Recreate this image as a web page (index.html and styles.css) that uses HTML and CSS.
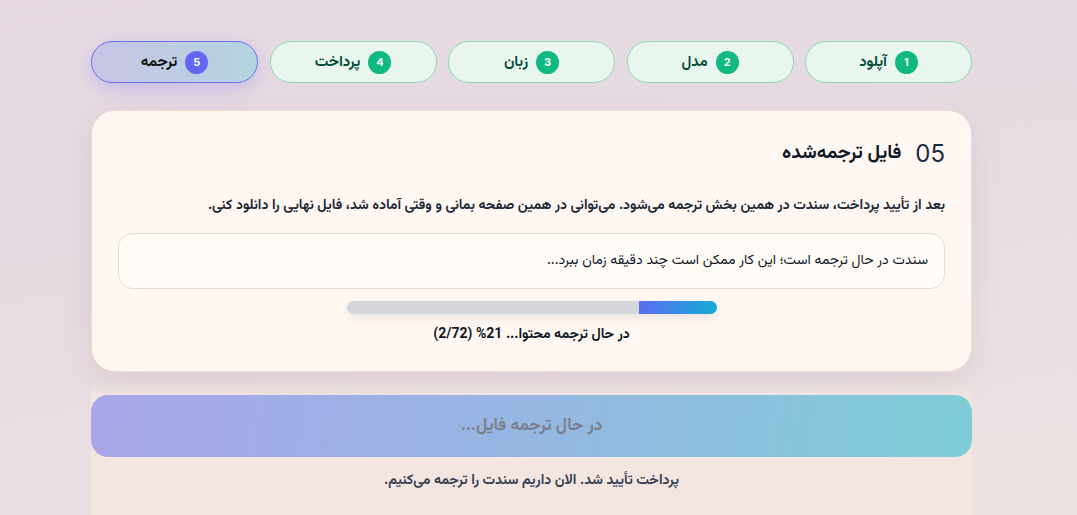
FILE: index.html
```html
<!DOCTYPE html>
<html lang="fa" dir="rtl">
<head>
<meta charset="utf-8">
<title>ترجمه</title>
<link rel="stylesheet" href="styles.css">
</head>
<body>
<div class="page">
  <ol class="steps">
    <li class="step"><span class="num">1</span><span class="label">آپلود</span></li>
    <li class="step"><span class="num">2</span><span class="label">مدل</span></li>
    <li class="step"><span class="num">3</span><span class="label">زبان</span></li>
    <li class="step"><span class="num">4</span><span class="label">پرداخت</span></li>
    <li class="step active"><span class="num">5</span><span class="label">ترجمه</span></li>
  </ol>

  <section class="card">
    <h2 class="card-title"><span class="idx">05</span><span>فایل ترجمه‌شده</span></h2>
    <p class="desc">بعد از تأیید پرداخت، سندت در همین بخش ترجمه می‌شود. می‌توانی در همین صفحه بمانی و وقتی آماده شد، فایل نهایی را دانلود کنی.</p>
    <div class="status">سندت در حال ترجمه است؛ این کار ممکن است چند دقیقه زمان ببرد...</div>
    <div class="progress-wrap">
      <div class="progress"><div class="fill" style="width:21%"></div></div>
      <div class="progress-text">در حال ترجمه محتوا... 21% (2/72)</div>
    </div>
  </section>

  <div class="footer">
    <button class="cta" disabled>در حال ترجمه فایل...</button>
    <p class="note">پرداخت تأیید شد. الان داریم سندت را ترجمه می‌کنیم.</p>
  </div>
</div>
</body>
</html>
```
FILE: styles.css
```css
* { box-sizing: border-box; }
html, body { margin: 0; height: 100%; }
body {
  font-family: "Vazirmatn", "Noto Sans Arabic", "DejaVu Sans", sans-serif;
  background: linear-gradient(170deg, #e6d9e3 0%, #e7dbe2 40%, #ede3e2 100%);
  color: #111827;
  overflow: hidden;
  padding-right: 14px;
}
.page {
  width: 881px;
  margin: 0 auto;
  padding-top: 41px;
}
.steps {
  list-style: none;
  margin: 0;
  padding: 0;
  display: grid;
  grid-template-columns: repeat(5, 1fr);
  gap: 11.5px;
}
.step {
  height: 42px;
  border: 1px solid #8ed9b7;
  background: #e9f6ee;
  border-radius: 999px;
  display: flex;
  align-items: center;
  justify-content: center;
  gap: 8px;
}
.num {
  width: 23px;
  height: 23px;
  border-radius: 50%;
  background: #10b981;
  color: #fff;
  font-family: "Inter", "Roboto", sans-serif;
  font-weight: 700;
  font-size: 11px;
  display: flex;
  align-items: center;
  justify-content: center;
}
.label {
  font-weight: 700;
  font-size: 15px;
  color: #064e3b;
}
.step.active {
  border-color: #6b70f2;
  background: linear-gradient(90deg, #c8c4e5 0%, #b4d4df 100%);
  box-shadow: 0 6px 18px rgba(99, 102, 241, 0.25);
}
.step.active .num { background: #6366f1; }
.step.active .label { color: #111; }

.card {
  margin-top: 27px;
  background: #fff8f2;
  border: 1px solid #efdccd;
  border-radius: 24px;
  padding: 29px 26px 25px;
  box-shadow: 0 10px 30px rgba(120, 90, 90, 0.12);
}
.card-title {
  margin: 0;
  display: flex;
  align-items: center;
  gap: 14px;
  font-size: 19px;
  font-weight: 700;
  line-height: 28px;
}
.idx {
  font-family: "Inter", "Roboto", sans-serif;
  font-weight: 400;
  font-size: 24px;
  color: #1f2a44;
}
.desc {
  margin: 27px 0 16px;
  font-size: 14px;
  font-weight: 700;
  color: #1f2937;
}
.status {
  background: #fffcf8;
  border: 1px solid #eadcd2;
  border-radius: 14px;
  padding: 0 16px;
  height: 56px;
  display: flex;
  align-items: center;
  font-size: 14px;
  color: #111827;
}
.progress-wrap {
  display: flex;
  flex-direction: column;
  align-items: center;
  margin-top: 12px;
}
.progress {
  width: 370px;
  height: 13px;
  border-radius: 999px;
  background: #d6d5d9;
  overflow: hidden;
  box-shadow: 0 4px 10px rgba(0, 0, 0, 0.08);
}
.fill {
  height: 100%;
  background: linear-gradient(270deg, #13acd6, #5b6cf0);
}
.progress-text {
  margin-top: 10px;
  font-size: 14px;
  font-weight: 700;
  color: #111827;
}
.footer {
  margin-top: 10px;
  padding-top: 13px;
  padding-bottom: 30px;
  background: linear-gradient(180deg, rgba(243, 230, 225, 0) 0%, #f3e6e1 20px, #f3e6e1 100%);
}
.cta {
  width: 100%;
  height: 62px;
  border: 0;
  border-radius: 17px;
  background: linear-gradient(100deg, #aaa6e8 0%, #96b7e2 50%, #7ecdd8 100%);
  color: #7a7f8b;
  font-family: inherit;
  font-weight: 700;
  font-size: 17px;
}
.note {
  margin: 13px 0 0;
  text-align: center;
  font-size: 14px;
  font-weight: 700;
  color: #374151;
}
```
